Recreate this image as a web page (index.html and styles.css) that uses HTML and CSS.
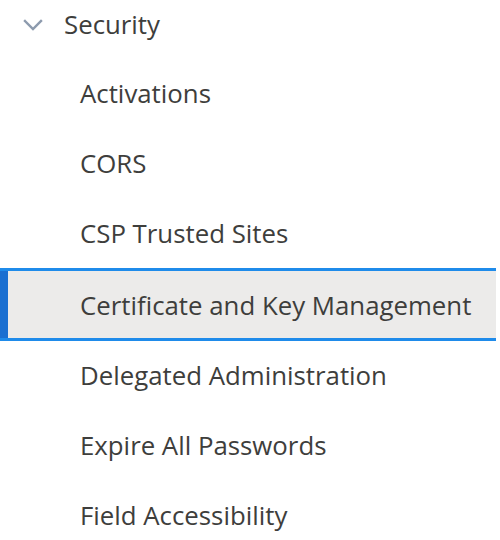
FILE: index.html
```html
<!DOCTYPE html>
<html>
<head>
<meta charset="utf-8">
<link rel="stylesheet" href="styles.css">
</head>
<body>
<nav class="tree">
  <div class="group">
    <svg class="chev" width="20" height="12" viewBox="0 0 20 12"><path d="M2 2 L10 10 L18 2" fill="none" stroke="#8d9bae" stroke-width="2.4" stroke-linecap="square"/></svg>
    <span class="group-label">Security</span>
  </div>
  <ul class="items">
    <li class="item">Activations</li>
    <li class="item">CORS</li>
    <li class="item">CSP Trusted Sites</li>
    <li class="item selected">Certificate and Key Management</li>
    <li class="item">Delegated Administration</li>
    <li class="item">Expire All Passwords</li>
    <li class="item">Field Accessibility</li>
  </ul>
</nav>
</body>
</html>
```
FILE: styles.css
```css
html, body {
  margin: 0;
  padding: 0;
  background: #ffffff;
}
body {
  font-family: "Open Sans", "Noto Sans", sans-serif;
  color: #3e3e3c;
  overflow: hidden;
}
.tree {
  width: 496px;
}
.group {
  height: 48px;
  display: flex;
  align-items: center;
}
.chev {
  margin-left: 23px;
  margin-right: 21px;
  margin-top: 2px;
}
.group-label {
  font-size: 25.8px;
}
.items {
  list-style: none;
  margin: 10px 0 0;
  padding: 0;
}
.item {
  height: 70px;
  display: flex;
  align-items: center;
  padding-left: 80px;
  font-size: 25.8px;
  box-sizing: border-box;
}
.item.selected {
  height: 73px;
  margin: 0 0 -1px;
  background: #ecebea;
  border-top: 3px solid #1f8bea;
  border-bottom: 3px solid #1f8bea;
  box-shadow: inset 8px 0 0 #1b6fd1;
}
```
